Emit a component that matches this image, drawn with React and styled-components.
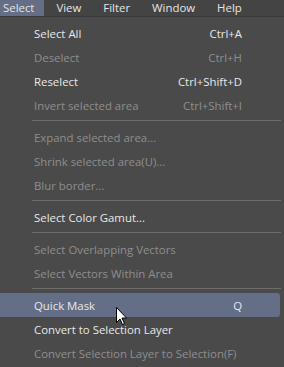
import React from "react";
import styled, { createGlobalStyle } from "styled-components";

const Global = createGlobalStyle`
  html, body { margin: 0; padding: 0; background: #4a4a4a; }
  body { font-family: "Open Sans", "Noto Sans", sans-serif; }
`;

const Page = styled.div`
  width: 284px;
  height: 367px;
  background: #4a4a4a;
  position: relative;
  overflow: hidden;
`;

const MenuBar = styled.div`
  height: 16px;
  display: flex;
  align-items: stretch;
  background: #444444;
  border-bottom: 1px solid #383838;
  font-size: 11.4px;
  color: #e4e4e4;
`;

const BarItem = styled.div`
  display: flex;
  align-items: center;
  padding: 0 ${(p) => p.$pr ?? 11}px 0 ${(p) => p.$pl ?? 11}px;
  background: ${(p) => (p.$active ? "#646e86" : "transparent")};
  line-height: 16px;
`;

const Menu = styled.div`
  padding-top: 4px;
  display: flex;
  flex-direction: column;
`;

const Item = styled.div`
  height: 24px;
  display: flex;
  align-items: center;
  justify-content: space-between;
  padding: 0 38px 0 34px;
  margin-right: 4px;
  font-size: 11.4px;
  color: ${(p) => (p.$disabled ? "#8e8e8e" : "#e8e8e8")};
  background: ${(p) => (p.$hover ? "#646e86" : "transparent")};
  border-radius: 0 3px 3px 0;
  white-space: nowrap;
`;

const Shortcut = styled.span``;

const Sep = styled.div`
  height: 1px;
  margin: 3px 3px 4px 32px;
  background: #6c6c6c;
`;

const Cursor = styled.svg`
  position: absolute;
  left: 116px;
  top: 307px;
`;

export default function App() {
  return (
    <Page>
      <Global />
      <MenuBar>
        <BarItem $active $pl={3} $pr={10}>Select</BarItem>
        <BarItem $pl={12} $pr={11}>View</BarItem>
        <BarItem>Filter</BarItem>
        <BarItem>Window</BarItem>
        <BarItem>Help</BarItem>
      </MenuBar>
      <Menu>
        <Item>Select All<Shortcut>Ctrl+A</Shortcut></Item>
        <Item $disabled>Deselect<Shortcut>Ctrl+H</Shortcut></Item>
        <Item>Reselect<Shortcut>Ctrl+Shift+D</Shortcut></Item>
        <Item $disabled>Invert selected area<Shortcut>Ctrl+Shift+I</Shortcut></Item>
        <Sep />
        <Item $disabled>Expand selected area...</Item>
        <Item $disabled>Shrink selected area(U)...</Item>
        <Item $disabled>Blur border...</Item>
        <Sep />
        <Item>Select Color Gamut...</Item>
        <Sep />
        <Item $disabled>Select Overlapping Vectors</Item>
        <Item $disabled>Select Vectors Within Area</Item>
        <Sep />
        <Item $hover>Quick Mask<Shortcut>Q</Shortcut></Item>
        <Item>Convert to Selection Layer</Item>
        <Item $disabled>Convert Selection Layer to Selection(F)</Item>
      </Menu>
      <Cursor width="12" height="19" viewBox="0 0 12 19">
        <path d="M0.5 0.5 L0.5 15.5 L4 12 L6.5 17.5 L8.5 16.5 L6 11 L10.5 11 Z" fill="#ffffff" stroke="#000000" strokeWidth="1" />
      </Cursor>
    </Page>
  );
}
